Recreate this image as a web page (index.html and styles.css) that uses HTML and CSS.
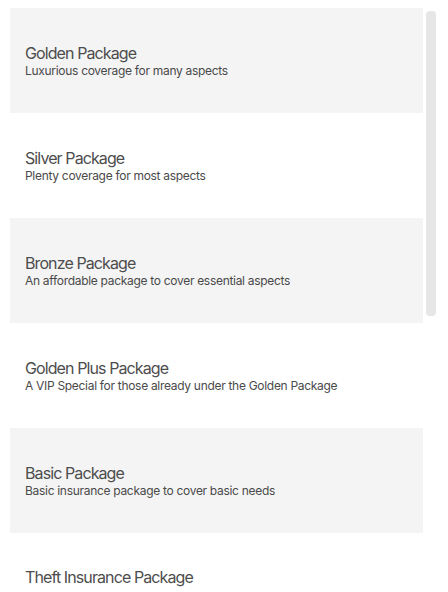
FILE: index.html
```html
<!DOCTYPE html>
<html>
<head>
<meta charset="utf-8">
<link rel="stylesheet" href="styles.css">
</head>
<body>
<div class="frame">
  <div class="list">
    <div class="item alt"><div class="title">Golden Package</div><div class="desc">Luxurious coverage for many aspects</div></div>
    <div class="item"><div class="title">Silver Package</div><div class="desc">Plenty coverage for most aspects</div></div>
    <div class="item alt"><div class="title">Bronze Package</div><div class="desc">An affordable package to cover essential aspects</div></div>
    <div class="item"><div class="title">Golden Plus Package</div><div class="desc">A VIP Special for those already under the Golden Package</div></div>
    <div class="item alt"><div class="title">Basic Package</div><div class="desc">Basic insurance package to cover basic needs</div></div>
    <div class="item last"><div class="title">Theft Insurance Package</div></div>
  </div>
  <div class="track"><div class="thumb"></div></div>
</div>
</body>
</html>
```
FILE: styles.css
```css
html, body {
  margin: 0;
  padding: 0;
  background: #ffffff;
  overflow: hidden;
}
body {
  font-family: Inter, "Noto Sans", sans-serif;
  color: #4a4a4a;
}
.frame {
  display: flex;
  gap: 3px;
  margin: 8px 0 0 10px;
  height: 584px;
  overflow: hidden;
}
.list {
  width: 413px;
  flex: none;
}
.track {
  width: 10px;
  flex: none;
  padding-top: 3px;
}
.thumb {
  height: 305px;
  background: #e6e6e6;
  border-radius: 4px;
}
.item {
  height: 105px;
  display: flex;
  flex-direction: column;
  justify-content: center;
  padding: 0 15px;
  box-sizing: border-box;
}
.item.alt {
  background: #f4f4f4;
}
.item.last {
  justify-content: flex-start;
  padding-top: 34px;
}
.title {
  font-size: 16px;
  line-height: 20px;
  letter-spacing: -0.9px;
  color: #4d4d4d;
}
.desc {
  font-size: 12px;
  line-height: 16px;
  letter-spacing: -0.3px;
  color: #4a4a4a;
}
```
